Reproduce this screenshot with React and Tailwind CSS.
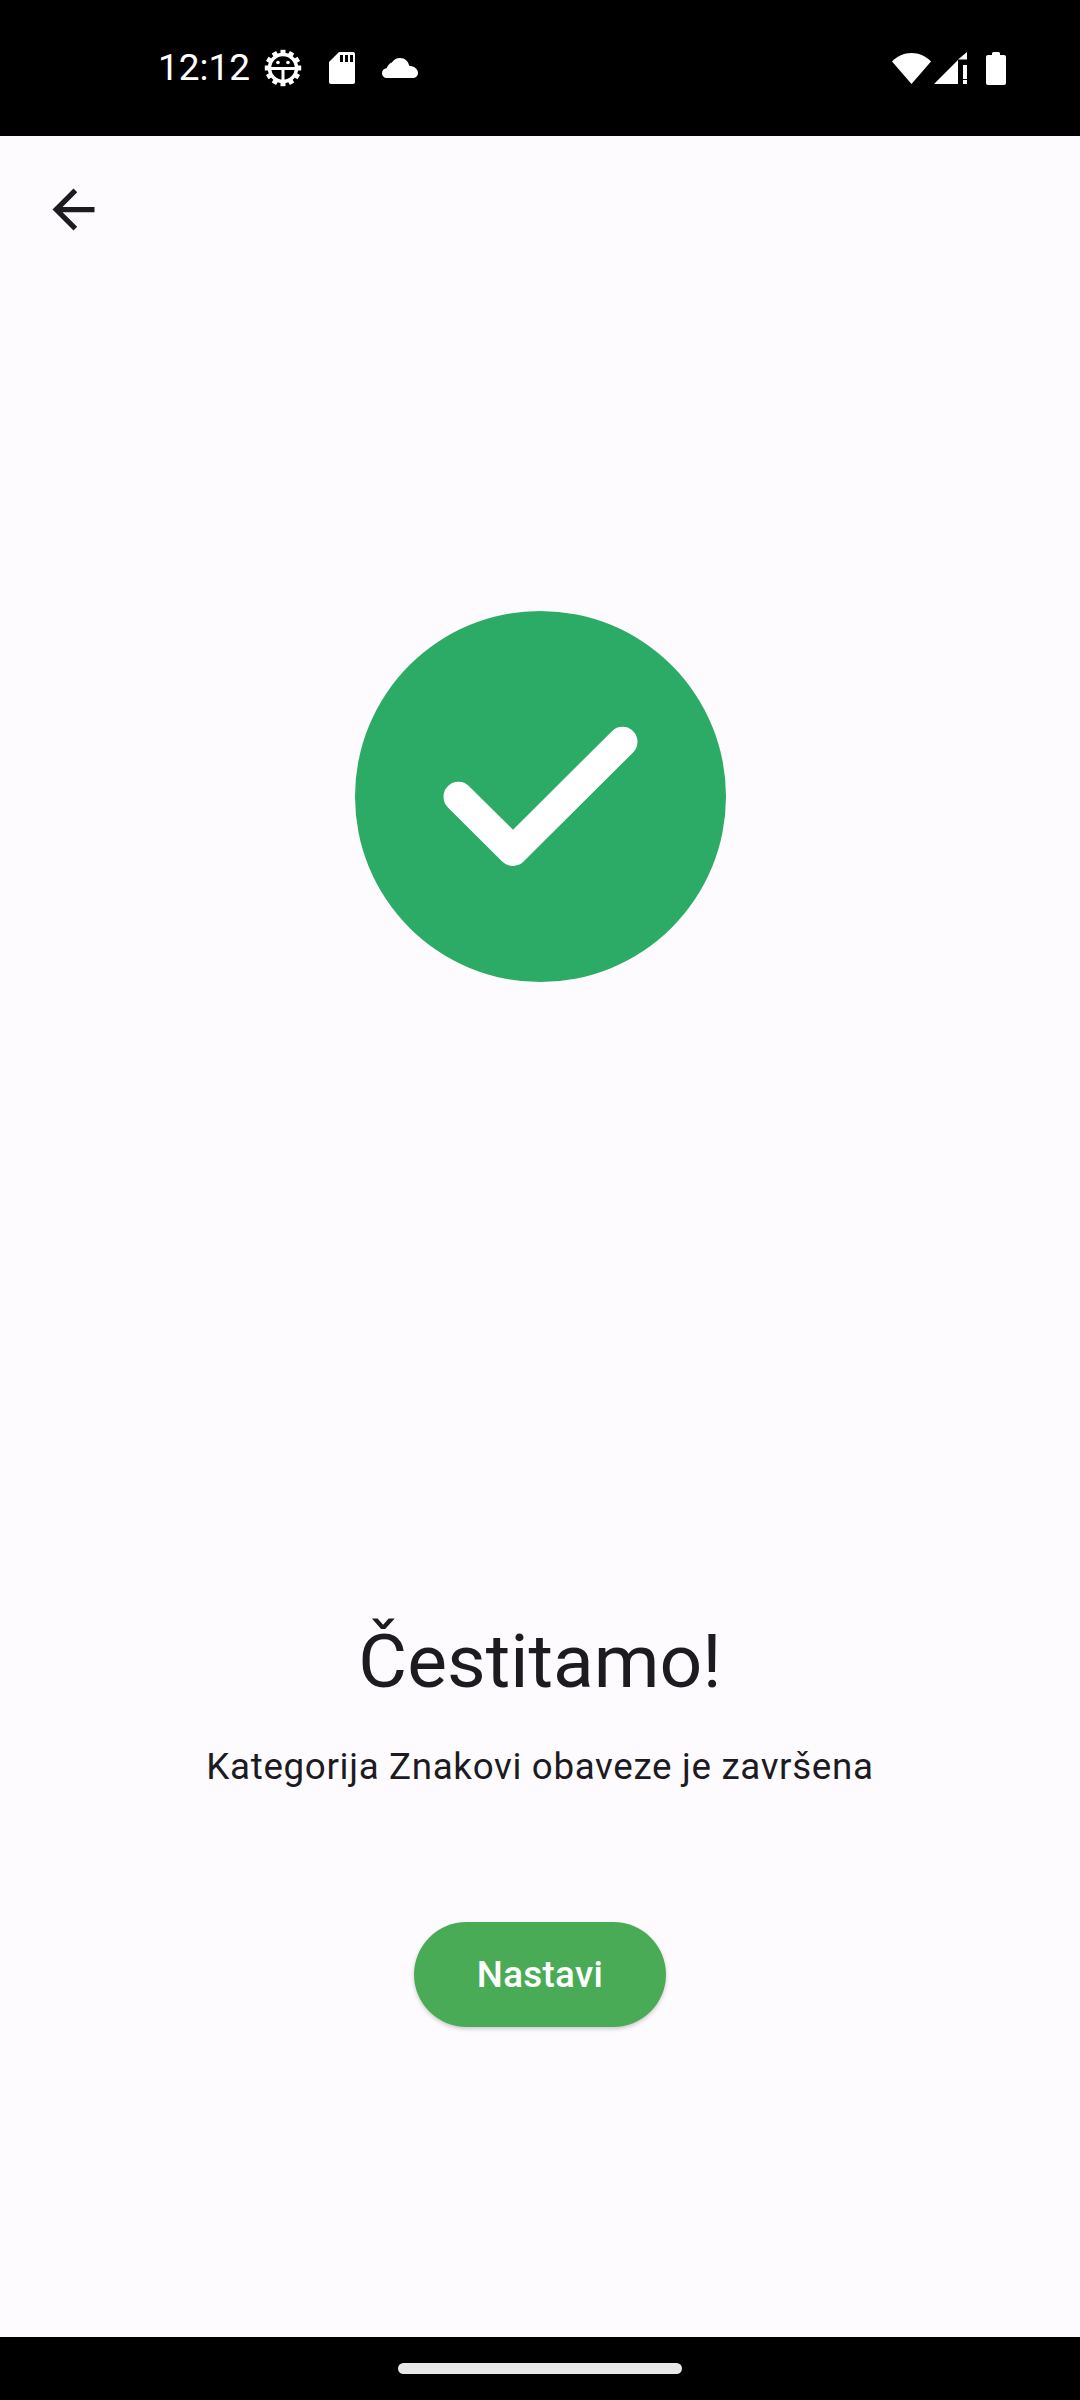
import React from 'react';

const GearIcon = () => {
    // 12 teeth round the ring
    const teeth = Array.from({ length: 12 }, (_, i) => (i * 360) / 12);
    return (
        <svg width="40" height="40" viewBox="0 0 40 40" className="shrink-0">
            {teeth.map((deg) => (
                <rect key={deg} x="17.500" y="1.800" width="5" height="5" fill="white" transform={`rotate(${deg} 20 20)`} />
            ))}
            <circle cx="20" cy="20" r="13.500" fill="none" stroke="white" strokeWidth="3.500" />
            <rect x="7" y="19" width="26" height="3" fill="white" />
            <rect x="18.500" y="19" width="3" height="15" fill="white" />
            <circle cx="15" cy="14.500" r="1.800" fill="white" />
            <circle cx="25" cy="14.500" r="1.800" fill="white" />
        </svg>
    );
};

const SdIcon = () => (
    <svg width="26" height="32" viewBox="0 0 26 32" className="shrink-0">
        <path d="M10 0h14a2 2 0 0 1 2 2v28a2 2 0 0 1-2 2H2a2 2 0 0 1-2-2V10z" fill="white" />
        <rect x="11" y="3" width="3" height="7" fill="black" />
        <rect x="16" y="3" width="3" height="7" fill="black" />
        <rect x="21" y="3" width="3" height="7" fill="black" />
    </svg>
);

const CloudIcon = () => (
    <svg width="36" height="20" viewBox="0 0 36 20" className="shrink-0">
        <path
            d="M5 20C2 20 0 17.800 0 15.200c0-2.600 1.900-4.600 4.600-4.900C6 7 8.200 5 9.800 4.600 11.600 1.800 14.500 0 18 0c4.800 0 8.300 3.300 9.300 7.800 4.700.3 8.700 3.200 8.700 7.200 0 2.800-2.200 5-5 5z"
            fill="white"
        />
    </svg>
);

const WifiIcon = () => (
    <svg width="39" height="31" viewBox="0 0 39 31" className="shrink-0">
        <path d="M19.500 31L0 8.500C5 3.200 12 0 19.500 0S34 3.200 39 8.500z" fill="white" />
    </svg>
);

const SignalIcon = () => (
    <svg width="33" height="32" viewBox="0 0 33 32" className="shrink-0">
        <path d="M0 32L24 8v24z" fill="white" />
        <path d="M24 7.500L33 0v7.500z" fill="white" />
        <rect x="29" y="13" width="4" height="14" fill="white" />
        <rect x="29" y="28" width="4" height="4" fill="white" />
    </svg>
);

const BatteryIcon = () => (
    <svg width="20" height="33" viewBox="0 0 20 33" className="shrink-0">
        <path
            d="M6 3V1.500A1.500 1.500 0 0 1 7.500 0h5A1.500 1.500 0 0 1 14 1.500V3h4a2 2 0 0 1 2 2v26a2 2 0 0 1-2 2H2a2 2 0 0 1-2-2V5a2 2 0 0 1 2-2z"
            fill="white"
        />
    </svg>
);

const App = () => {
    return (
        <div className="w-[1080px] h-[2400px] flex flex-col bg-[#fefbff] font-['Roboto',sans-serif] overflow-hidden">
            {/* Status bar */}
            <div className="h-[136px] shrink-0 bg-black flex items-center justify-between pl-[158px] pr-[74px] text-white">
                <div className="flex items-center">
                    <span className="text-[37px] leading-[42px] w-[88px]">12:12</span>
                    <div className="ml-[17px]"><GearIcon /></div>
                    <div className="ml-[26px]"><SdIcon /></div>
                    <div className="ml-[27px]"><CloudIcon /></div>
                </div>
                <div className="flex items-center">
                    <WifiIcon />
                    <div className="ml-[3px]"><SignalIcon /></div>
                    <div className="ml-[19px]"><BatteryIcon /></div>
                </div>
            </div>

            <div className="flex-1 flex flex-col items-center">
                {/* App bar */}
                <div className="w-full h-[147px] shrink-0 flex items-center pl-[42px]">
                    <svg width="63" height="63" viewBox="0 0 24 24" fill="#1c1b1f">
                        <path d="M20 11H7.830l5.590-5.590L12 4l-8 8 8 8 1.410-1.410L7.830 13H20v-2z" />
                    </svg>
                </div>

                {/* Success mark */}
                <div className="mt-[328px] w-[371px] h-[371px] rounded-full bg-[#2cab66] shrink-0">
                    <svg width="371" height="371" viewBox="0 0 371 371" fill="none">
                        <path
                            d="M103.500 185.800L158 240L267.500 130.800"
                            stroke="white"
                            strokeWidth="30"
                            strokeLinecap="round"
                            strokeLinejoin="round"
                        />
                    </svg>
                </div>

                <h1 className="mt-[630px] text-[75px] leading-[98px] font-normal text-[#1c1b1f]">Čestitamo!</h1>
                <p className="mt-[32px] text-[36.750px] leading-[50px] tracking-[0.660px] text-[#1c1b1f]">
                    Kategorija Znakovi obaveze je završena
                </p>

                <button className="mt-[130px] h-[105px] w-[252px] rounded-full bg-[#4aab56] text-white text-[36.750px] font-medium tracking-[0.300px] shadow-[0_2px_4px_rgba(0,0,0,0.2)]">
                    Nastavi
                </button>
            </div>

            {/* Navigation bar */}
            <div className="h-[63px] shrink-0 bg-black flex items-center justify-center">
                <div className="w-[284px] h-[11px] rounded-full bg-[#e8e8e8]" />
            </div>
        </div>
    );
};

export default App;
